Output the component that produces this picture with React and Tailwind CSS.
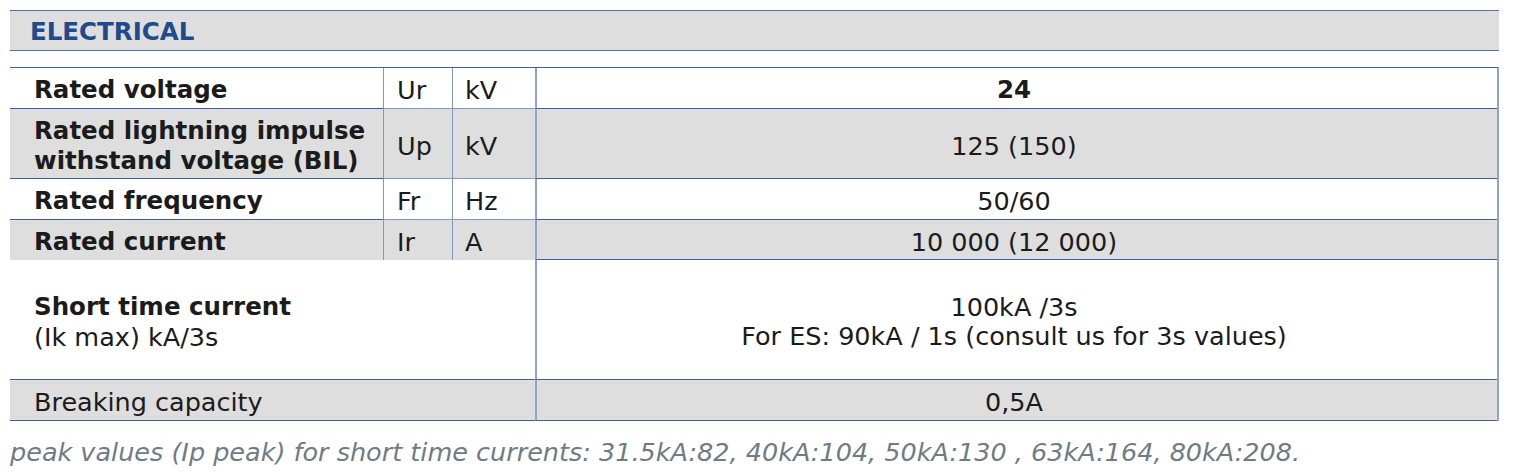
import React from "react";

const H = "border-b border-[#3e5f9b]";
const V = "border-l border-[#8196c2]";

function Row({ bg, h, name, sym, unit, value, boldValue, noBottomLeft }) {
  const hb = noBottomLeft ? "" : H;
  return (
    <div className={`grid grid-cols-[373px_69px_83px_1fr] ${bg} ${h}`}>
      <div className={`flex items-center pt-[4px] pl-[24px] font-bold text-[24.5px] leading-[30px] ${hb}`}>{name}</div>
      <div className={`flex items-center pt-[4px] pl-[13px] ${V} ${hb}`}>{sym}</div>
      <div className={`flex items-center pt-[4px] pl-[12px] ${V} ${hb}`}>{unit}</div>
      <div className={`flex items-center justify-center pt-[4px] pr-[6px] border-l-2 border-l-[#8fa3cc] ${H} ${boldValue ? "font-bold text-[24.5px]" : ""}`}>{value}</div>
    </div>
  );
}

export default function App() {
  return (
    <div className="w-[1524px] h-[474px] bg-white text-[#1b1b1b] text-[25.5px]" style={{ fontFamily: '"DejaVu Sans", Verdana, sans-serif' }}>
      <div className="pt-[10px] pl-[10px] w-[1499px]">
        <div className="h-[41px] bg-[#dedede] border-t border-b border-[#5374ad] flex items-center pt-[2px] pl-[20px]">
          <span className="font-bold text-[#1f4b8e] text-[24.5px] leading-[30px]">ELECTRICAL</span>
        </div>
        <div className="mt-[16px] border-t border-[#3e5f9b] border-r-2 border-r-[#8fa3cc] leading-[30px]">
          <Row bg="bg-white" h="h-[41px]" name="Rated voltage" sym="Ur" unit="kV" value="24" boldValue />
          <Row bg="bg-[#dedede]" h="h-[70px]" name={<span>Rated lightning impulse<br />withstand voltage (BIL)</span>} sym="Up" unit="kV" value="125 (150)" />
          <Row bg="bg-white" h="h-[41px]" name="Rated frequency" sym="Fr" unit="Hz" value="50/60" />
          <Row bg="bg-[#dedede]" h="h-[40px]" name="Rated current" sym="Ir" unit="A" value="10 000 (12 000)" noBottomLeft />
          <div className="grid grid-cols-[525px_1fr] h-[120px] bg-white">
            <div className={`flex flex-col justify-center pt-[4px] pl-[24px] leading-[30px] ${H}`}>
              <span className="font-bold text-[24.5px]">Short time current</span>
              <span>(Ik max) kA/3s</span>
            </div>
            <div className={`flex flex-col items-center justify-center pt-[4px] pr-[6px] leading-[29px] border-l-2 border-l-[#8fa3cc] ${H}`}>
              <span>100kA /3s</span>
              <span>For ES: 90kA / 1s (consult us for 3s values)</span>
            </div>
          </div>
          <div className="grid grid-cols-[525px_1fr] h-[41px] bg-[#dedede]">
            <div className={`flex items-center pt-[4px] pl-[24px] ${H}`}>Breaking capacity</div>
            <div className={`flex items-center justify-center pt-[4px] pr-[6px] border-l-2 border-l-[#8fa3cc] ${H}`}>0,5A</div>
          </div>
        </div>
      </div>
      <div className="pl-[10px] pt-[16px] leading-[30px] italic text-[#6f7b85] text-[25.5px]">
        peak values (Ip peak) for short time currents: 31.5kA:82, 40kA:104, 50kA:130 , 63kA:164, 80kA:208.
      </div>
    </div>
  );
}
